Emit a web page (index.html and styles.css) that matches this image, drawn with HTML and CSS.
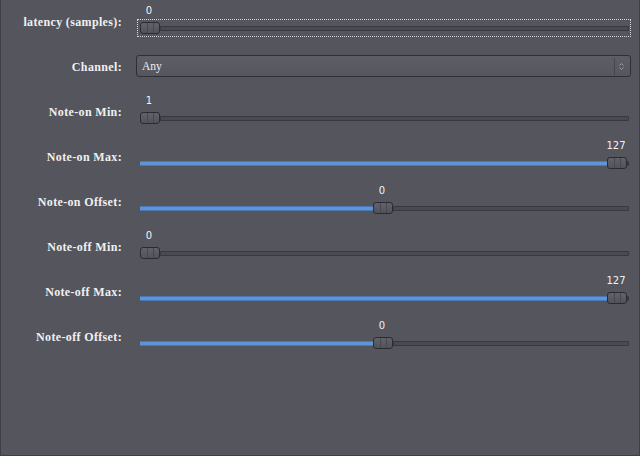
FILE: index.html
```html
<!DOCTYPE html>
<html>
<head>
<meta charset="utf-8">
<link rel="stylesheet" href="styles.css">
</head>
<body>
<div class="panel">
  <div class="row">
    <div class="label">latency (samples):</div>
    <div class="control">
      <div class="value-row"><span class="value" style="margin-left:0px">0</span></div>
      <div class="slider focus">
        <div class="fill" style="width:0px"></div><div class="handle"></div><div class="rest"></div>
      </div>
    </div>
  </div>
  <div class="row">
    <div class="label">Channel:</div>
    <div class="combo">
      <span class="combo-text">Any</span>
      <span class="combo-sep"></span>
      <svg class="combo-arrows" width="5" height="9" viewBox="0 0 5 9"><path d="M0.5 3.5 L2.5 1.5 L4.5 3.5 M0.5 5.5 L2.5 7.5 L4.5 5.5" fill="none" stroke="#9a9aa2" stroke-width="1"/></svg>
    </div>
  </div>
  <div class="row">
    <div class="label">Note-on Min:</div>
    <div class="control">
      <div class="value-row"><span class="value" style="margin-left:0px">1</span></div>
      <div class="slider">
        <div class="fill" style="width:0px"></div><div class="handle"></div><div class="rest"></div>
      </div>
    </div>
  </div>
  <div class="row">
    <div class="label">Note-on Max:</div>
    <div class="control">
      <div class="value-row"><span class="value" style="margin-left:467px">127</span></div>
      <div class="slider">
        <div class="fill" style="width:467px"></div><div class="handle"></div><div class="rest"></div>
      </div>
    </div>
  </div>
  <div class="row">
    <div class="label">Note-on Offset:</div>
    <div class="control">
      <div class="value-row"><span class="value" style="margin-left:233px">0</span></div>
      <div class="slider">
        <div class="fill" style="width:233px"></div><div class="handle"></div><div class="rest"></div>
      </div>
    </div>
  </div>
  <div class="row">
    <div class="label">Note-off Min:</div>
    <div class="control">
      <div class="value-row"><span class="value" style="margin-left:0px">0</span></div>
      <div class="slider">
        <div class="fill" style="width:0px"></div><div class="handle"></div><div class="rest"></div>
      </div>
    </div>
  </div>
  <div class="row">
    <div class="label">Note-off Max:</div>
    <div class="control">
      <div class="value-row"><span class="value" style="margin-left:467px">127</span></div>
      <div class="slider">
        <div class="fill" style="width:467px"></div><div class="handle"></div><div class="rest"></div>
      </div>
    </div>
  </div>
  <div class="row">
    <div class="label">Note-off Offset:</div>
    <div class="control">
      <div class="value-row"><span class="value" style="margin-left:233px">0</span></div>
      <div class="slider">
        <div class="fill" style="width:233px"></div><div class="handle"></div><div class="rest"></div>
      </div>
    </div>
  </div>
</div>
</body>
</html>
```
FILE: styles.css
```css
html, body {
  margin: 0;
  padding: 0;
  background: #55555e;
}
.panel {
  width: 640px;
  height: 456px;
  box-sizing: border-box;
  border: 1px solid #3e3e45;
  border-top: none;
  background: #55555e;
  color: #ececec;
}
.row {
  display: flex;
  height: 45px;
}
.label {
  width: 121px;
  text-align: right;
  font-family: "Liberation Serif", serif;
  font-weight: bold;
  font-size: 12px;
  letter-spacing: 0.35px;
  line-height: 14px;
  padding-top: 15px;
  color: #f0f0f0;
  white-space: nowrap;
}
.control {
  margin-left: 15px;
  width: 494px;
  padding-top: 5px;
}
.value-row {
  display: flex;
  height: 12px;
  padding-left: 2px;
  margin-bottom: 2px;
}
.value {
  display: block;
  width: 20px;
  text-align: center;
  font-family: "DejaVu Sans", sans-serif;
  font-size: 10px;
  line-height: 12px;
  color: #f2f2f2;
  white-space: nowrap;
}
.slider {
  display: flex;
  align-items: center;
  height: 18px;
  box-sizing: border-box;
  border: 1px dotted transparent;
  padding: 0 1px 0 2px;
}
.slider.focus {
  border-color: #d8d8dc;
}
.fill {
  height: 5px;
  background: #5f95d6;
  box-shadow: inset 0 1px 0 #4a78b2, inset 0 -1px 0 #4a78b2;
  flex: none;
}
.handle {
  flex: none;
  width: 20px;
  height: 12px;
  box-sizing: border-box;
  border: 1px solid #2b2b31;
  border-radius: 3px;
  background:
    linear-gradient(90deg, transparent 6px, #47474e 6px, #47474e 7px, transparent 7px, transparent 12px, #47474e 12px, #47474e 13px, transparent 13px),
    linear-gradient(180deg, #62626b, #52525a);
}
.rest {
  flex: 1;
  height: 5px;
  box-sizing: border-box;
  background: #4a4a52;
  border: 1px solid #38383f;
  border-radius: 0 1px 1px 0;
}
.combo {
  margin-left: 14px;
  margin-top: 10px;
  width: 495px;
  height: 22px;
  box-sizing: border-box;
  border: 1px solid #2f2f35;
  border-radius: 3px;
  background: linear-gradient(180deg, #5e5e67, #56565e);
  display: flex;
  align-items: center;
  padding-left: 5px;
}
.combo-text {
  flex: 1;
  font-family: "Liberation Serif", serif;
  font-size: 11.5px;
  color: #eeeeee;
}
.combo-sep {
  width: 1px;
  height: 17px;
  background: #45454c;
  margin-right: 4px;
}
.combo-arrows {
  margin-right: 6px;
}
```
